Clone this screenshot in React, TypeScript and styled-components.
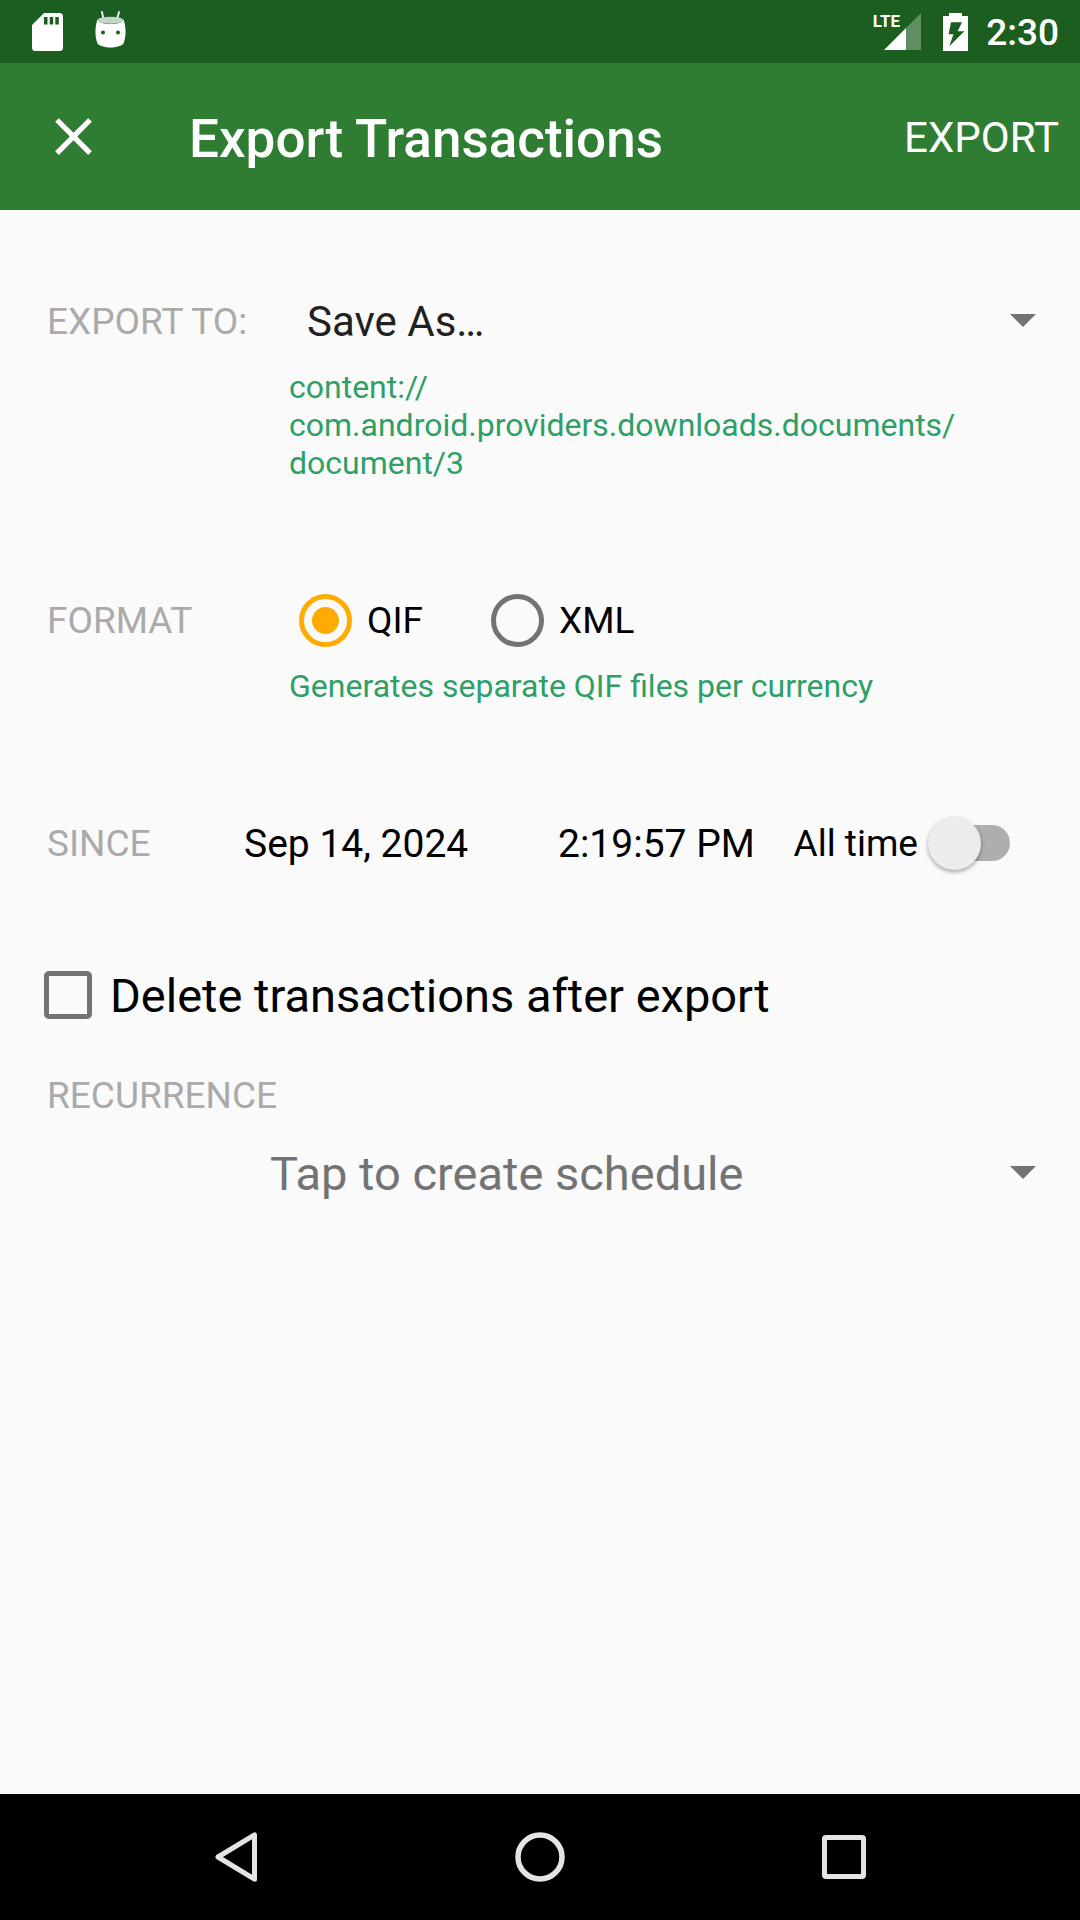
import React, { useState } from "react";
import styled, { createGlobalStyle } from "styled-components";

const GlobalStyle = createGlobalStyle`
  *, *::before, *::after { box-sizing: border-box; }
  body {
    margin: 0;
    background: #fafafa;
    color: #000;
    font-family: Roboto, "Noto Sans", sans-serif;
  }
  button, input, select {
    margin: 0;
    padding: 0;
    border: 0;
    background: none;
    color: inherit;
    font: inherit;
  }
  svg { display: block; flex: none; }
`;

const Screen = styled.div`
  display: flex;
  flex-direction: column;
  min-height: 100vh;
`;

const StatusBar = styled.div`
  display: flex;
  align-items: center;
  justify-content: space-between;
  height: 63px;
  padding: 0 21px 0 32px;
  background: #1b5e20;
  color: #fff;
`;

const StatusGroup = styled.div<{ $gap: number }>`
  display: flex;
  align-items: center;
  gap: ${(p) => p.$gap}px;
`;

const Signal = styled.div`
  position: relative;
`;

const NetworkType = styled.span`
  position: absolute;
  top: 12px;
  right: 21px;
  font-size: 17px;
  line-height: 18px;
  font-weight: 700;
`;

const Clock = styled.time`
  padding-top: 2px;
  font-size: 37px;
  line-height: 44px;
  font-weight: 500;
`;

const Toolbar = styled.header`
  display: flex;
  align-items: center;
  height: 147px;
  padding: 0 21px 0 42px;
  background: #2e7d32;
  color: #fff;
`;

const CloseButton = styled.button`
  width: 63px;
  height: 63px;
  margin-right: 84px;
`;

const Title = styled.h1`
  flex: 1;
  margin: 0;
  padding-top: 4px;
  font-size: 53px;
  line-height: 64px;
  font-weight: 500;
`;

const ExportButton = styled.button`
  padding-top: 2px;
  font-size: 42px;
  line-height: 50px;
`;

const Form = styled.form`
  flex: 1;
  padding: 64px 44px 0;
`;

const Section = styled.section<{ $space: number }>`
  margin-bottom: ${(p) => p.$space}px;
`;

const FieldRow = styled.div`
  display: grid;
  grid-template-columns: 245px 1fr;
  align-items: center;
  min-height: 94px;
`;

const SinceRow = styled(FieldRow)`
  grid-template-columns: 200px 4fr 3fr auto;
  padding-right: 26px;
`;

const Caption = styled.span`
  padding-top: 2px;
  padding-left: 3px;
  font-size: 37px;
  line-height: 44px;
  color: #aaa;
  text-transform: uppercase;
`;

const RecurrenceCaption = styled(Caption)`
  display: block;
  padding-top: 11px;
  padding-bottom: 8px;
`;

const Hint = styled.p`
  margin: 0 0 0 245px;
  font-size: 32px;
  line-height: 38px;
  color: #2ea066;
`;

const SelectBox = styled.div<{ $indent: number }>`
  display: grid;
  align-items: center;
  padding-left: ${(p) => p.$indent}px;

  & > * { grid-area: 1 / 1; }
  & > svg { justify-self: end; pointer-events: none; }
`;

const Select = styled.select<{ $size: number; $color: string }>`
  appearance: none;
  width: 100%;
  height: 94px;
  font-size: ${(p) => p.$size}px;
  color: ${(p) => p.$color};
`;

const Options = styled.div`
  display: flex;
  gap: 68px;
  padding-left: 10px;
`;

const Choice = styled.label<{ $size: number; $gap: number }>`
  display: flex;
  align-items: center;
  gap: ${(p) => p.$gap}px;
  font-size: ${(p) => p.$size}px;
  line-height: 56px;
  white-space: nowrap;
`;

const ChoiceText = styled.span`
  padding-top: 2px;
`;

const Radio = styled.input`
  appearance: none;
  display: grid;
  place-items: center;
  width: 53px;
  height: 53px;
  border: 5px solid #737373;
  border-radius: 50%;

  &:checked { border-color: #ffab00; }
  &:checked::before {
    content: "";
    width: 27px;
    height: 27px;
    border-radius: 50%;
    background: #ffab00;
  }
`;

const PickerButton = styled.button`
  justify-self: start;
  padding-top: 2px;
  font-size: 39px;
  line-height: 48px;
  white-space: nowrap;
`;

const Switch = styled.input`
  appearance: none;
  display: grid;
  align-items: center;
  width: 82px;
  height: 53px;

  &::before, &::after { content: ""; grid-area: 1 / 1; }
  &::before {
    height: 36px;
    margin-left: 8px;
    border-radius: 18px;
    background: #aeaeae;
  }
  &::after {
    width: 53px;
    height: 53px;
    border-radius: 50%;
    background: #ececec;
    box-shadow: 0 2px 4px rgba(0, 0, 0, 0.35);
  }
  &:checked::before { background: #ffd580; }
  &:checked::after { justify-self: end; background: #ffab00; }
`;

const CheckRow = styled.div`
  display: flex;
  align-items: center;
  min-height: 94px;
`;

const Checkbox = styled.input`
  appearance: none;
  width: 48px;
  height: 48px;
  border: 5px solid #737373;
  border-radius: 5px;

  &:checked {
    border-color: #ffab00;
    background: #ffab00;
  }
`;

const NavBar = styled.nav`
  display: flex;
  justify-content: center;
  height: 126px;
  background: #000;
`;

const NavButton = styled.button`
  display: grid;
  place-items: center;
  width: 304px;
`;

const SdCardIcon = () => (
  <svg width="31" height="38" viewBox="0 0 31 38">
    <path
      fill="#fff"
      fillRule="evenodd"
      d="M12 0h15.500a3.500 3.500 0 0 1 3.500 3.500v31a3.500 3.500 0 0 1-3.500 3.500h-24A3.500 3.500 0 0 1 0 34.500V12zM12 4v7.500h3.500V4zm5.700 0v7.500h3.500V4zm5.600 0v7.500h3.500V4z"
    />
  </svg>
);

const DroidIcon = () => (
  <svg width="31" height="42" viewBox="0 0 31 42">
    <path stroke="#fff" strokeWidth="1.800" strokeLinecap="round" d="M7 1l1.500 7.500M24 1l-1.900 7.500" />
    <path
      fill="#fff"
      d="M2.500 8.500C4 12 9 13 15.500 13S27 12 28.500 8.500C31 15 31.500 25 28.500 32.500C27.500 34.500 21 36.500 15.500 36.500S3.500 34.500 2.500 32.500C-.5 25 0 15 2.500 8.500z"
    />
    <ellipse cx="15.500" cy="9.300" rx="13" ry="3.500" fill="#c3d6c5" />
    <circle cx="8" cy="21.500" r="2" fill="#1b5e20" />
    <circle cx="23" cy="21.500" r="2" fill="#1b5e20" />
  </svg>
);

const SignalIcon = () => (
  <svg width="37" height="63" viewBox="0 0 37 63">
    <path fill="#fff" d="M0 50l22-22v22z" />
    <path fill="#fff" fillOpacity="0.3" d="M22 28L37 13v37H22z" />
  </svg>
);

const BatteryIcon = () => (
  <svg width="29" height="38" viewBox="-4 0 29 38">
    <path
      fill="#fff"
      fillRule="evenodd"
      d="M6 0h13v3h6v35H0V3h6zM8 9.300L5.600 21.300h4.900L6.300 33.300L21.300 18.200H14.700L19 9.300z"
    />
  </svg>
);

const CloseIcon = () => (
  <svg width="63" height="63" viewBox="0 0 24 24">
    <path
      fill="#fff"
      d="M19 6.410L17.590 5 12 10.590 6.410 5 5 6.410 10.590 12 5 17.590 6.410 19 12 13.410 17.590 19 19 17.590 13.410 12z"
    />
  </svg>
);

const ArrowIcon = () => (
  <svg width="26" height="15" viewBox="0 0 26 15">
    <path fill="#737373" d="M0 0h26L13 13z" />
  </svg>
);

const BackIcon = () => (
  <svg width="42" height="50" viewBox="0 0 42 50" fill="none" stroke="#e4e4e4" strokeWidth="5" strokeLinejoin="round">
    <path d="M39.500 2.800v44.400L3 25z" />
  </svg>
);

const HomeIcon = () => (
  <svg width="50" height="50" viewBox="0 0 50 50" fill="none" stroke="#e4e4e4" strokeWidth="5.500">
    <circle cx="25" cy="25" r="22" />
  </svg>
);

const RecentsIcon = () => (
  <svg width="44" height="44" viewBox="0 0 44 44" fill="none" stroke="#e4e4e4" strokeWidth="5">
    <rect x="2.500" y="2.500" width="39" height="39" rx="1.500" />
  </svg>
);

export default function App() {
  const [format, setFormat] = useState("QIF");
  const [allTime, setAllTime] = useState(false);
  const [deleteAfter, setDeleteAfter] = useState(false);

  return (
    <Screen>
      <GlobalStyle />
      <StatusBar>
        <StatusGroup $gap={32}>
          <SdCardIcon />
          <DroidIcon />
        </StatusGroup>
        <StatusGroup $gap={18}>
          <Signal>
            <SignalIcon />
            <NetworkType>LTE</NetworkType>
          </Signal>
          <BatteryIcon />
          <Clock>2:30</Clock>
        </StatusGroup>
      </StatusBar>

      <Toolbar>
        <CloseButton type="button" aria-label="Close">
          <CloseIcon />
        </CloseButton>
        <Title>Export Transactions</Title>
        <ExportButton type="submit" form="export-form">EXPORT</ExportButton>
      </Toolbar>

      <Form id="export-form" onSubmit={(e) => e.preventDefault()}>
        <Section $space={91}>
          <FieldRow>
            <Caption as="label" htmlFor="destination">Export to:</Caption>
            <SelectBox $indent={18}>
              <Select id="destination" $size={42} $color="#212121">
                <option>Save As…</option>
              </Select>
              <ArrowIcon />
            </SelectBox>
          </FieldRow>
          <Hint>
            content://
            <wbr />
            com.android.providers.downloads.documents/
            <wbr />
            document/3
          </Hint>
        </Section>

        <Section $space={91}>
          <FieldRow role="radiogroup" aria-labelledby="format-caption">
            <Caption id="format-caption">Format</Caption>
            <Options>
              {["QIF", "XML"].map((name) => (
                <Choice key={name} $size={37} $gap={15}>
                  <Radio
                    type="radio"
                    name="format"
                    checked={format === name}
                    onChange={() => setFormat(name)}
                  />
                  <ChoiceText>{name}</ChoiceText>
                </Choice>
              ))}
            </Options>
          </FieldRow>
          <Hint>Generates separate QIF files per currency</Hint>
        </Section>

        <Section $space={58}>
          <SinceRow>
            <Caption>Since</Caption>
            <PickerButton type="button">Sep 14, 2024</PickerButton>
            <PickerButton type="button">2:19:57 PM</PickerButton>
            <Choice $size={37} $gap={10}>
              <ChoiceText>All time</ChoiceText>
              <Switch
                type="checkbox"
                role="switch"
                checked={allTime}
                onChange={(e) => setAllTime(e.target.checked)}
              />
            </Choice>
          </SinceRow>
        </Section>

        <Section $space={21}>
          <CheckRow>
            <Choice $size={47} $gap={18}>
              <Checkbox
                type="checkbox"
                checked={deleteAfter}
                onChange={(e) => setDeleteAfter(e.target.checked)}
              />
              <ChoiceText>Delete transactions after export</ChoiceText>
            </Choice>
          </CheckRow>
        </Section>

        <Section $space={0}>
          <RecurrenceCaption as="label" htmlFor="recurrence">Recurrence</RecurrenceCaption>
          <SelectBox $indent={226}>
            <Select id="recurrence" $size={47} $color="#737373">
              <option>Tap to create schedule</option>
            </Select>
            <ArrowIcon />
          </SelectBox>
        </Section>
      </Form>

      <NavBar>
        <NavButton type="button" aria-label="Back"><BackIcon /></NavButton>
        <NavButton type="button" aria-label="Home"><HomeIcon /></NavButton>
        <NavButton type="button" aria-label="Recent apps"><RecentsIcon /></NavButton>
      </NavBar>
    </Screen>
  );
}
